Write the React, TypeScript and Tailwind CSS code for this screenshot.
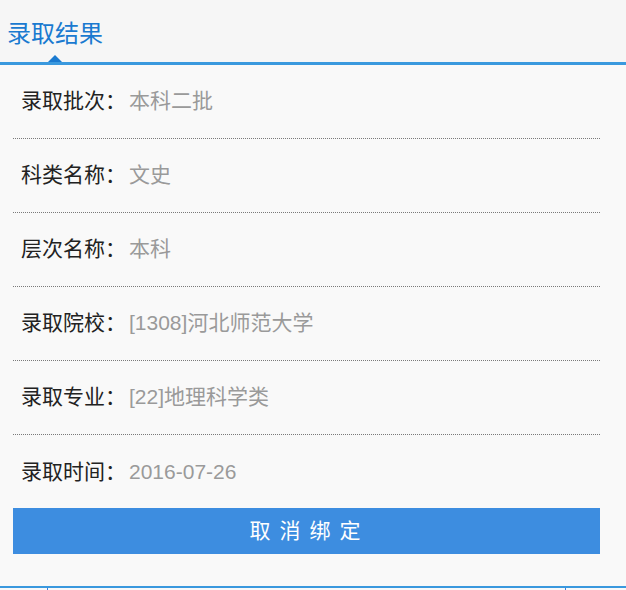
const rows = [
  { label: '录取批次', value: '本科二批' },
  { label: '科类名称', value: '文史' },
  { label: '层次名称', value: '本科' },
  { label: '录取院校', value: '[1308]河北师范大学' },
  { label: '录取专业', value: '[22]地理科学类' },
  { label: '录取时间', value: '2016-07-26' },
];

export default function App() {
  return (
    <div
      className="flex h-[590px] w-[626px] flex-col overflow-hidden bg-[#f9f9f9]"
      style={{ fontFamily: '"Liberation Sans", "Noto Sans CJK SC", sans-serif' }}
    >
      {/* header tab */}
      <div className="relative h-[65px] shrink-0 border-b-[3px] border-[#3a99de] bg-[#f6f6f6]">
        <div className="pl-[7px] pt-[18px] text-[24px] leading-[32px] text-[#1a7ad0]">录取结果</div>
        <span className="absolute bottom-0 left-[48px] h-0 w-0 border-x-[7px] border-b-[7px] border-x-transparent border-b-[#1a7ad0]" />
      </div>

      {/* result rows */}
      <div className="pl-[13px] pr-[26px]">
        {rows.map((r, i) => (
          <div
            key={r.label}
            className={
              i < rows.length - 1
                ? 'flex h-[74px] items-center border-b border-dotted border-[#7a7a7a] pl-[8px] pb-[1px] text-[21px]'
                : 'flex h-[73px] items-center pl-[8px] pt-[1px] text-[21px]'
            }
          >
            <span className="text-[#222]">{r.label}：</span>
            <span className="ml-[3px] text-[#9a9a9a]">{r.value}</span>
          </div>
        ))}

        <button className="flex h-[46px] w-full items-center justify-center bg-[#3d8de0] pl-[6px] text-[21px] tracking-[9px] text-white">
          取消绑定
        </button>
      </div>

      {/* bottom tab bar edge */}
      <div className="mt-auto flex h-[4px] shrink-0 border-t-2 border-[#3a99de] bg-[#f9f9f9]">
        <div className="w-[48px] border-r border-[#3a7fe0]" />
        <div className="flex-1 border-r border-[#3a7fe0]" />
        <div className="w-[60px]" />
      </div>
    </div>
  );
}
